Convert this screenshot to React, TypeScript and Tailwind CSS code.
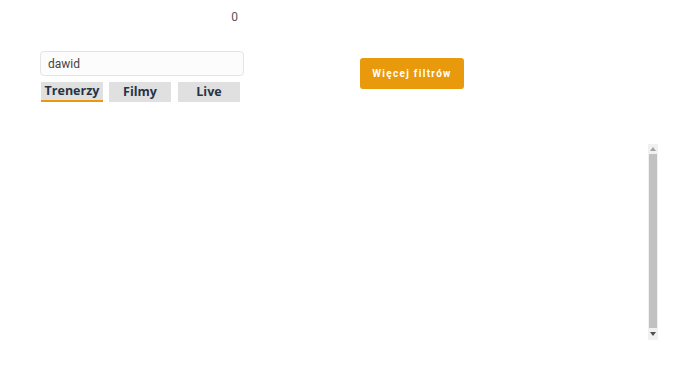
import React from 'react'

const tabs = ['Trenerzy', 'Filmy', 'Live']

export default function App() {
  return (
    <div className="relative w-[690px] h-[388px] bg-white" style={{ fontFamily: "'Open Sans', sans-serif" }}>
      <div className="flex pl-[40px]">
        {/* Left column */}
        <div className="w-[204px]">
          <div className="h-[51px] pt-[8px] pr-[6px] text-right text-[12px] text-[#555]" style={{ fontFamily: "Roboto, sans-serif" }}>
            0
          </div>
          <div className="h-[25px] rounded-[4px] border border-[#e4e4e4] bg-[#fcfcfc] pl-[7px] flex items-center text-[12px] text-[#444]" style={{ fontFamily: "Roboto, sans-serif" }}>
            dawid
          </div>
          <div className="flex gap-[6px] mt-[6px] pl-px">
            {tabs.map((t, i) => (
              <div
                key={t}
                className={`w-[62px] h-[20px] bg-[#e0e0e0] flex items-center justify-center text-[12.5px] font-bold text-[#263445] ${
                  i === 0 ? 'border-b-2 border-[#e8990c]' : ''
                } ${i === 2 ? 'ml-px' : ''}`}
                style={{ fontFamily: "'Open Sans', sans-serif" }}
              >
                {t}
              </div>
            ))}
          </div>
        </div>

        {/* Filter button */}
        <div className="ml-[116px] pt-[58px]">
          <button className="w-[104px] h-[31px] rounded-[3px] bg-[#e8990c] text-white text-[10px] font-bold tracking-[0.13em]" style={{ fontFamily: "Roboto, sans-serif" }}>
            Więcej filtrów
          </button>
        </div>
      </div>

      {/* Scrollbar */}
      <div className="absolute left-[648px] top-[144px] w-[10px] h-[196px] bg-[#f1f1f1] flex flex-col">
        <div className="h-[10px] flex items-center justify-center">
          <svg width="6" height="4" viewBox="0 0 6 4"><path d="M3 0L6 4H0z" fill="#a3a3a3" /></svg>
        </div>
        <div className="flex-1 mx-px bg-[#c1c1c1]" />
        <div className="h-[12px] flex items-center justify-center">
          <svg width="6" height="4" viewBox="0 0 6 4"><path d="M0 0H6L3 4z" fill="#505050" /></svg>
        </div>
      </div>
    </div>
  )
}
